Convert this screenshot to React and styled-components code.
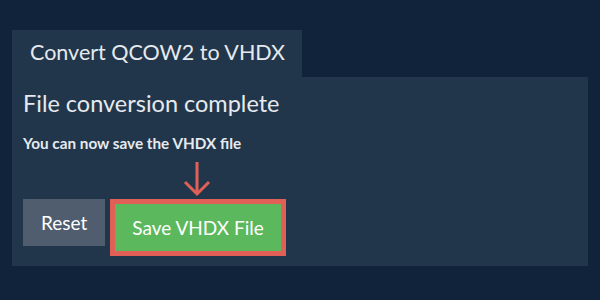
import styled, { createGlobalStyle } from "styled-components";

const GlobalStyle = createGlobalStyle`
  html, body {
    margin: 0;
    padding: 0;
    background: #10233a;
    font-family: Lato, "Open Sans", sans-serif;
    color: #e6eaee;
  }
`;

const Page = styled.div`
  width: 600px;
  height: 300px;
  box-sizing: border-box;
  padding: 30px 12px 0;
`;

const Tab = styled.div`
  display: inline-block;
  height: 47px;
  line-height: 45px;
  padding: 0 17px 0 18px;
  background: #22364b;
  font-size: 21.5px;
  color: #e6eaee;
`;

const Panel = styled.section`
  background: #22364b;
  height: 189px;
  box-sizing: border-box;
  padding: 9px 11px 0;
`;

const Heading = styled.h2`
  margin: 0;
  font-size: 23.5px;
  font-weight: 400;
  line-height: 34px;
`;

const Note = styled.p`
  margin: 13px 0 0;
  font-size: 15.3px;
  font-weight: 700;
  line-height: 20px;
`;

const Actions = styled.div`
  display: flex;
  align-items: flex-start;
  gap: 5px;
  margin-top: 46px;
`;

const Button = styled.button`
  font-family: inherit;
  font-size: 19px;
  color: #fff;
  border: none;
  height: 47px;
  padding: 0 ${(p) => (p.$primary ? "17px" : "18px")};
  background: ${(p) => (p.$primary ? "#5cb85c" : "#4f5d6e")};
  cursor: pointer;
`;

const Highlight = styled.div`
  position: relative;
  border: 5px solid #e06058;
  display: flex;
`;

const Arrow = styled.svg`
  position: absolute;
  left: 67px;
  top: -42px;
`;

export default function App() {
  return (
    <Page>
      <GlobalStyle />
      <Tab>Convert QCOW2 to VHDX</Tab>
      <Panel>
        <Heading>File conversion complete</Heading>
        <Note>You can now save the VHDX file</Note>
        <Actions>
          <Button>Reset</Button>
          <Highlight>
            <Arrow width="30" height="36" viewBox="0 0 30 36">
              <path d="M15 0 V32 M3 20 L15 32 L27 20" fill="none" stroke="#e06058" strokeWidth="3" />
            </Arrow>
            <Button $primary>Save VHDX File</Button>
          </Highlight>
        </Actions>
      </Panel>
    </Page>
  );
}
